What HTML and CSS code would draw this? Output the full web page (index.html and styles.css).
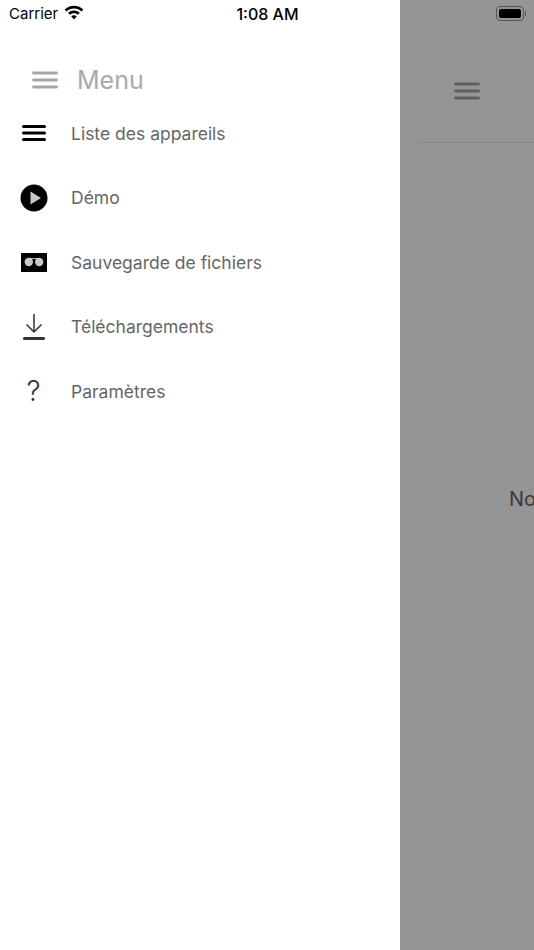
FILE: index.html
```html
<!DOCTYPE html>
<html lang="fr">
<head>
  <meta charset="UTF-8">
  <title>Menu</title>
  <meta name="viewport" content="width=device-width, initial-scale=1">
  <link rel="stylesheet" href="styles.css">
</head>
<body>
  <div class="screen">
    <!-- Barre d'état -->
    <div class="status-bar">
      <div class="status-left">
        <span>Carrier</span>
        <svg class="wifi" width="20" height="15" viewBox="0 0 20 15">
          <path d="M10 .8c3.600 0 6.900 1.400 9.300 3.700l-1.800 2C15.500 4.600 12.900 3.500 10 3.500S4.500 4.600 2.500 6.500l-1.800-2C3.100 2.200 6.400.8 10 .8z" fill="#000"/>
          <path d="M10 5.600c2.200 0 4.200.9 5.800 2.200l-1.800 2C12.900 8.900 11.500 8.300 10 8.300s-2.900.6-4 1.500l-1.800-2C5.800 6.500 7.800 5.600 10 5.600z" fill="#000"/>
          <path d="M10 10.200c1.100 0 2.100.4 2.800 1.100L10 14.500l-2.800-3.200c.7-.7 1.700-1.100 2.800-1.100z" fill="#000"/>
        </svg>
      </div>
      <div class="status-time">1:08 AM</div>
      <div class="status-right">
        <div class="battery"><span class="battery-level"></span></div>
        <span class="battery-nub"></span>
      </div>
    </div>

    <!-- Menu latéral -->
    <div class="drawer">
      <div class="drawer-header">
        <svg width="26" height="18" viewBox="0 0 26 18">
          <path d="M1.500 2h23M1.500 9h23M1.500 16h23" stroke="#a6a6a6" stroke-width="2.800" stroke-linecap="round"/>
        </svg>
        <span class="drawer-title">Menu</span>
      </div>
      <ul class="menu">
        <li class="menu-item">
          <span class="menu-icon">
            <svg width="24" height="18" viewBox="0 0 24 18">
              <path d="M1.500 2.500h21M1.500 9h21M1.500 15.500h21" stroke="#000" stroke-width="3" stroke-linecap="round"/>
            </svg>
          </span>
          <span>Liste des appareils</span>
        </li>
        <li class="menu-item">
          <span class="menu-icon">
            <svg width="28" height="28" viewBox="0 0 28 28">
              <circle cx="14" cy="14" r="13.500" fill="#000"/>
              <path d="M10.500 7.500L21 14l-10.500 6.500z" fill="#c8c8c8"/>
            </svg>
          </span>
          <span>Démo</span>
        </li>
        <li class="menu-item">
          <span class="menu-icon">
            <svg width="26" height="19" viewBox="0 0 26 19">
              <rect width="26" height="19" fill="#000"/>
              <circle cx="7.800" cy="9" r="4.200" fill="#c8c8c8"/>
              <circle cx="18.200" cy="9" r="4.200" fill="#c8c8c8"/>
              <path d="M7.800 5.600h10.400" stroke="#c8c8c8" stroke-width="1"/>
            </svg>
          </span>
          <span>Sauvegarde de fichiers</span>
        </li>
        <li class="menu-item">
          <span class="menu-icon">
            <svg width="24" height="28" viewBox="0 0 24 28">
              <path d="M12 1v18M4.500 11.500L12 19l7.500-7.500" fill="none" stroke="#333" stroke-width="1.500"/>
              <path d="M2.500 25.500h19" stroke="#333" stroke-width="3.200" stroke-linecap="round"/>
            </svg>
          </span>
          <span>Téléchargements</span>
        </li>
        <li class="menu-item">
          <span class="menu-icon menu-icon-help">?</span>
          <span>Paramètres</span>
        </li>
      </ul>
    </div>

    <!-- Écran derrière le menu, assombri -->
    <div class="backdrop">
      <div class="backdrop-header">
        <svg width="26" height="18" viewBox="0 0 26 18">
          <path d="M1.500 2h23M1.500 9h23M1.500 16h23" stroke="#606060" stroke-width="2.800" stroke-linecap="round"/>
        </svg>
      </div>
      <div class="backdrop-message">No devices</div>
    </div>
  </div>
</body>
</html>
```

FILE: styles.css
```css
/* Styles généraux */
html, body {
  margin: 0;
  padding: 0;
}
body {
  font-family: Inter, "Liberation Sans", sans-serif;
  background-color: #fff;
}
.screen {
  position: relative;
  display: flex;
  width: 534px;
  height: 950px;
  overflow: hidden;
}

/* Barre d'état */
.status-bar {
  position: absolute;
  top: 0;
  left: 0;
  right: 0;
  height: 27px;
  display: flex;
  align-items: center;
  padding: 0 8px 0 9px;
  font-size: 15px;
  color: #000;
}
.status-left, .status-right {
  flex: 1;
  display: flex;
  align-items: center;
}
.status-left {
  gap: 6px;
}
.status-right {
  justify-content: flex-end;
  gap: 1px;
}
.wifi {
  margin-top: -3px;
}
.status-time {
  font-size: 16px;
  font-weight: 500;
}
.battery {
  box-sizing: border-box;
  width: 28px;
  height: 15px;
  padding: 2px;
  border: 1px solid #555;
  border-radius: 4px;
}
.battery-level {
  display: block;
  height: 100%;
  background-color: #000;
  border-radius: 2px;
}
.battery-nub {
  width: 1px;
  height: 5px;
  background-color: #555;
}

/* Menu latéral */
.drawer {
  width: 400px;
  flex-shrink: 0;
  padding-top: 63px;
  background-color: #fff;
}
.drawer-header {
  display: flex;
  align-items: center;
  gap: 19px;
  height: 34px;
  padding-left: 32px;
}
.drawer-title {
  font-size: 25px;
  color: #a9a9a9;
}
.menu {
  list-style: none;
  margin: 0;
  padding: 4px 0 0;
}
.menu-item {
  display: flex;
  align-items: center;
  height: 64.500px;
  font-size: 17.500px;
  color: #666;
}
.menu-icon {
  display: flex;
  align-items: center;
  justify-content: center;
  width: 33px;
  margin: 0 21px 0 17px;
}
.menu-icon-help {
  font-size: 28px;
  font-weight: 350;
  color: #333;
}

/* Écran derrière le menu */
.backdrop {
  flex: 1;
  min-width: 0;
  background-color: #959595;
  overflow: hidden;
}
.backdrop-header {
  box-sizing: border-box;
  height: 143px;
  margin-left: 19px;
  padding: 82px 0 0 35px;
  border-bottom: 1px solid #858585;
}
.backdrop-message {
  margin-top: 344px;
  padding-left: 109px;
  font-size: 20px;
  color: #3a3a3a;
  white-space: nowrap;
}
```
